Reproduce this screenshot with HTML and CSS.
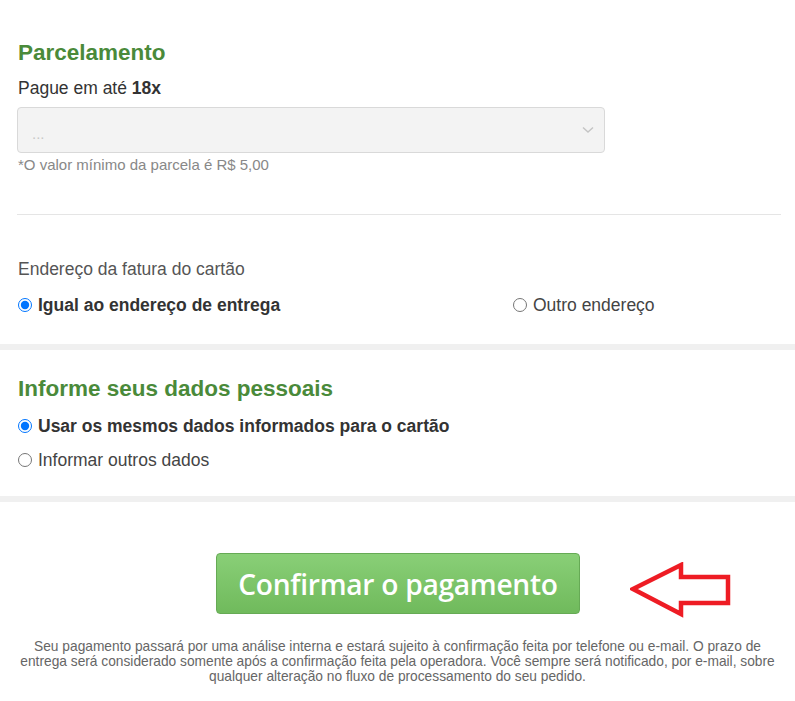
FILE: index.html
```html
<!DOCTYPE html>
<html lang="pt-BR">
<head>
<meta charset="utf-8">
<link rel="stylesheet" href="styles.css">
</head>
<body>
<section class="panel first">
  <h2 class="title">Parcelamento</h2>
  <p class="label">Pague em até <b>18x</b></p>
  <div class="select"><span class="placeholder">...</span>
    <svg class="chev" width="12" height="8" viewBox="0 0 12 8"><path d="M1 1.5 L6 6 L11 1.5" fill="none" stroke="#c4c4c4" stroke-width="1.4"/></svg>
  </div>
  <p class="note">*O valor mínimo da parcela é R$ 5,00</p>
  <hr class="rule">
  <p class="label addr">Endereço da fatura do cartão</p>
  <div class="radios-row">
    <label class="opt strong"><input type="radio" name="end" checked> Igual ao endereço de entrega</label>
    <label class="opt other"><input type="radio" name="end"> Outro endereço</label>
  </div>
</section>
<div class="band"></div>
<section class="panel second">
  <h2 class="title">Informe seus dados pessoais</h2>
  <label class="opt strong row1"><input type="radio" name="dados" checked> Usar os mesmos dados informados para o cartão</label>
  <label class="opt row2"><input type="radio" name="dados"> Informar outros dados</label>
</section>
<div class="band"></div>
<section class="confirm">
  <div class="btn-wrap">
    <button class="btn">Confirmar o pagamento</button>
    <svg class="arrow" width="104" height="58" viewBox="0 0 104 58"><polygon points="3,27 51,3 51,15 98,15 98,41 51,41 51,52" fill="none" stroke="#ee1c24" stroke-width="4.5" stroke-linejoin="miter"/></svg>
  </div>
  <p class="disclaimer">Seu pagamento passará por uma análise interna e estará sujeito à confirmação feita por telefone ou e-mail. O prazo de entrega será considerado somente após a confirmação feita pela operadora. Você sempre será notificado, por e-mail, sobre qualquer alteração no fluxo de processamento do seu pedido.</p>
</section>
</body>
</html>
```
FILE: styles.css
```css
html, body {
  margin: 0;
  padding: 0;
  background: #fff;
  font-family: "Liberation Sans", Arial, sans-serif;
  color: #333;
}
.panel {
  padding: 0 14px 0 17px;
}
.first {
  padding-top: 39px;
  padding-bottom: 28px;
}
.title {
  margin: 0;
  font-size: 22.5px;
  line-height: 28px;
  font-weight: bold;
  color: #4a8a3a;
  padding-left: 1px;
}
.label {
  margin: 10px 0 0 1px;
  font-size: 17.5px;
  line-height: 22px;
  color: #333;
}
.label b {
  color: #333;
}
.select {
  margin-top: 8px;
  width: 588px;
  height: 46px;
  background: #f3f3f3;
  border: 1px solid #d9d9d9;
  border-radius: 4px;
  display: flex;
  align-items: center;
  justify-content: space-between;
  padding: 0 10px 0 14px;
  box-sizing: border-box;
}
.placeholder {
  color: #c8c8c8;
  font-size: 15px;
  position: relative;
  top: 3px;
}
.note {
  margin: 3px 0 0 1px;
  font-size: 15px;
  line-height: 18px;
  color: #888;
}
.rule {
  margin: 40px 0 0 0;
  border: 0;
  border-top: 1px solid #e5e5e5;
}
.addr {
  margin-top: 43px;
  color: #555;
}
.radios-row {
  display: flex;
  margin-top: 14px;
}
.opt {
  display: flex;
  align-items: center;
  font-size: 17.5px;
  line-height: 22px;
  color: #444;
}
.opt input {
  margin: 0 6px 0 1px;
  width: 14px;
  height: 14px;
  accent-color: #0075ff;
}
.strong {
  font-weight: bold;
  color: #333;
}
.radios-row .strong {
  width: 495px;
}
.band {
  height: 6px;
  background: #f0f0f0;
}
.second {
  padding-top: 25px;
  padding-bottom: 25px;
}
.row1 {
  margin-top: 12px;
}
.row2 {
  margin-top: 12px;
}
.confirm {
  padding-top: 51px;
}
.btn-wrap {
  position: relative;
  display: flex;
  justify-content: center;
}
.btn {
  width: 364px;
  height: 61px;
  margin-left: 1px;
  border: 1px solid #66aa55;
  border-radius: 4px;
  background: linear-gradient(#89cf77, #70ba5c);
  color: #fff;
  font-family: "Open Sans", sans-serif;
  font-weight: 600;
  font-size: 28.2px;
  letter-spacing: -0.3px;
  padding: 0;
}
.arrow {
  position: absolute;
  left: 630px;
  top: 9px;
}
.disclaimer {
  margin: 25px 14px 0 14px;
  text-align: center;
  font-size: 13.75px;
  line-height: 15px;
  color: #666;
}
```
